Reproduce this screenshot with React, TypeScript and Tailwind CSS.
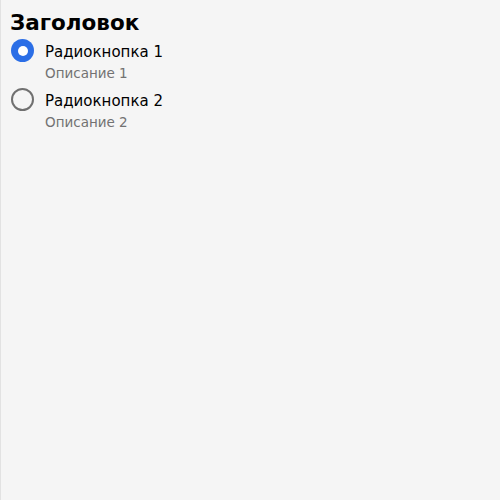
import React, { useState } from 'react';

const options = [
  { id: 1, label: 'Радиокнопка 1', description: 'Описание 1' },
  { id: 2, label: 'Радиокнопка 2', description: 'Описание 2' },
];

export default function App() {
  const [selected, setSelected] = useState(1);

  return (
    <div className="min-h-[500px] w-[500px] border-l border-[#e2e2e2] bg-[#f5f5f5] px-[10px] pt-[10px] font-['DejaVu_Sans',sans-serif] text-black">
      <h2 className="-ml-[1px] text-[21.5px] font-bold leading-[26px]">Заголовок</h2>
      <div className="mt-[5px] flex flex-col gap-[8px]">
        {options.map((opt) => {
          const checked = selected === opt.id;
          return (
            <label key={opt.id} className="flex cursor-pointer items-start gap-[11px]" onClick={() => setSelected(opt.id)}>
              <span
                className={`-mt-[2px] flex h-[23px] w-[23px] shrink-0 items-center justify-center rounded-full ${
                  checked ? 'bg-[#2b6ee6]' : 'border-2 border-[#707070]'
                }`}
              >
                {checked && <span className="h-[10px] w-[10px] rounded-full bg-white" />}
              </span>
              <span className="flex flex-col">
                <span className="text-[15px] leading-[23px]">{opt.label}</span>
                <span className="text-[13.5px] leading-[18px] text-[#727272]">{opt.description}</span>
              </span>
            </label>
          );
        })}
      </div>
    </div>
  );
}
